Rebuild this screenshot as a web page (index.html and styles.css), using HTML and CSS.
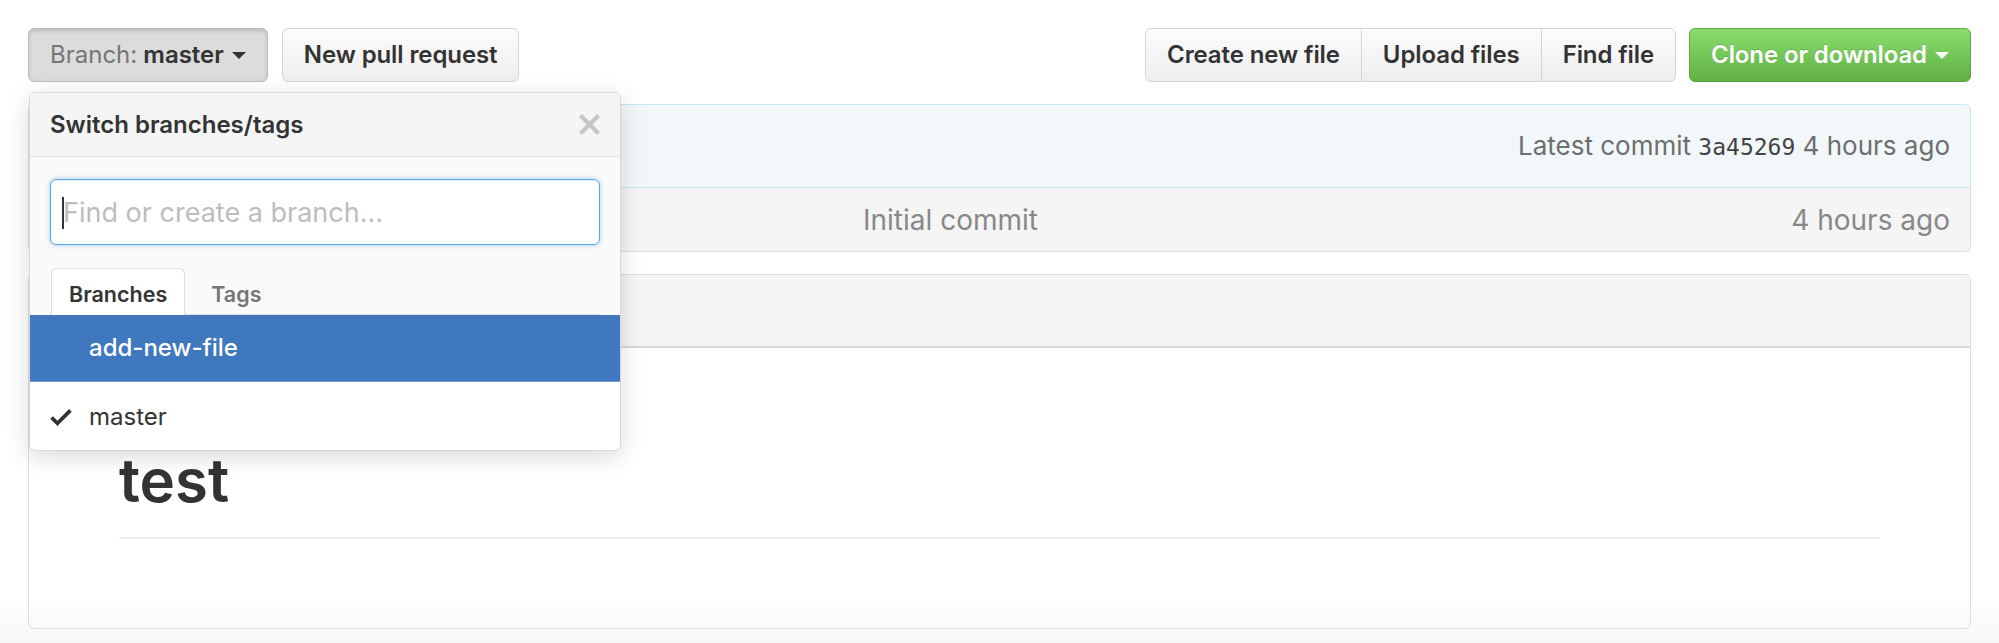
FILE: index.html
```html
<!DOCTYPE html>
<html lang="en">
<head>
<meta charset="utf-8">
<title>Repository</title>
<link rel="stylesheet" href="styles.css">
</head>
<body>
<div class="page">
  <div class="file-navigation">
    <div class="nav-left">
      <div class="branch-select">
        <button class="btn btn-selected"><span class="btn-label">Branch:</span>&nbsp;<span class="btn-strong">master</span><span class="caret"></span></button>
        <div class="select-menu">
          <div class="select-menu-header">
            <span class="select-menu-title">Switch branches/tags</span>
            <svg class="close-icon" viewBox="0.77 2.77 10.46 10.46" aria-hidden="true"><path d="M7.48 8l3.75 3.75-1.48 1.48L6 9.480l-3.75 3.75-1.48-1.48L4.52 8 .77 4.25l1.48-1.48L6 6.52l3.75-3.75 1.48 1.48L7.48 8z"/></svg>
          </div>
          <div class="select-menu-filters">
            <div class="filter-field">
              <input class="filter-input" type="text" placeholder="Find or create a branch...">
              <span class="fake-caret"></span>
            </div>
            <div class="tabs">
              <span class="tab selected">Branches</span>
              <span class="tab">Tags</span>
            </div>
          </div>
          <div class="select-menu-list">
            <div class="select-menu-item focus">
              <span class="item-icon"></span>
              <span class="item-text">add-new-file</span>
            </div>
            <div class="select-menu-item last">
              <svg class="item-icon" viewBox="0 3.5 12 9.5" aria-hidden="true"><path d="M12 5l-8 8-4-4 1.5-1.5L4 10l6.5-6.5L12 5z"/></svg>
              <span class="item-text">master</span>
            </div>
          </div>
        </div>
      </div>
      <button class="btn">New pull request</button>
    </div>
    <div class="nav-right">
      <div class="btn-group">
        <button class="btn">Create new file</button>
        <button class="btn">Upload files</button>
        <button class="btn">Find file</button>
      </div>
      <button class="btn btn-primary">Clone or download<span class="caret"></span></button>
    </div>
  </div>

  <div class="commit-tease">
    <span>Latest commit&nbsp;<span class="sha">3a45269</span>&nbsp;4 hours ago</span>
  </div>
  <div class="files">
    <div class="file-row">
      <span class="file-name"></span>
      <span class="message">Initial commit</span>
      <span class="age">4 hours ago</span>
    </div>
  </div>

  <div class="readme">
    <div class="readme-header"></div>
    <div class="markdown">
      <h1>test</h1>
    </div>
  </div>
</div>
</body>
</html>
```

FILE: styles.css
```css
* {
  box-sizing: border-box;
}

html, body {
  margin: 0;
  padding: 0;
}

body {
  font-family: Inter, "Liberation Sans", Arial, sans-serif;
  color: #333;
  min-height: 643px;
  background: linear-gradient(#ffffff 596px, #f7f7f7 643px);
}

.page {
  padding: 28px 28px 0 28px;
}

/* ---------- top navigation ---------- */
.file-navigation {
  display: flex;
  justify-content: space-between;
  align-items: flex-start;
}

.nav-left {
  display: flex;
  gap: 14px;
}

.nav-right {
  display: flex;
  gap: 13px;
}

.btn {
  height: 54px;
  padding: 0 21px;
  border: 1px solid #d5d5d5;
  border-radius: 6px;
  background: linear-gradient(#fcfcfc, #eeeeee);
  font-family: Inter, "Liberation Sans", Arial, sans-serif;
  font-size: 24px;
  font-weight: 600;
  letter-spacing: -0.1px;
  line-height: 52px;
  color: #333;
  display: inline-flex;
  align-items: center;
  white-space: nowrap;
  cursor: pointer;
}

.btn-selected {
  background: #dcdcdc;
  border-color: #bcbcbc;
  box-shadow: inset 0 2px 4px rgba(0, 0, 0, 0.15);
  letter-spacing: 0;
}

.btn-label {
  color: #767676;
  font-weight: 400;
}

.caret {
  display: inline-block;
  width: 0;
  height: 0;
  border-style: solid;
  border-width: 7px 7px 0 7px;
  border-color: #333 transparent transparent transparent;
  margin-left: 8px;
}

.btn-primary {
  color: #fff;
  background: linear-gradient(#8add6d, #60b044);
  border-color: #5ca941;
  text-shadow: 0 -1px 0 rgba(0, 0, 0, 0.15);
}

.btn-primary .caret {
  border-top-color: #fff;
}

.btn-group {
  display: flex;
}

.btn-group .btn {
  border-radius: 0;
}

.btn-group .btn + .btn {
  margin-left: -1px;
}

.btn-group .btn:first-child {
  border-radius: 6px 0 0 6px;
}

.btn-group .btn:last-child {
  border-radius: 0 6px 6px 0;
}

/* ---------- branch select menu ---------- */
.branch-select {
  position: relative;
}

.select-menu {
  position: absolute;
  top: 64px;
  left: 1px;
  width: 592px;
  background: #fff;
  border: 1px solid #d8d8d8;
  border-radius: 6px;
  box-shadow: 0 6px 24px rgba(0, 0, 0, 0.15);
  z-index: 10;
  overflow: hidden;
}

.select-menu-header {
  height: 64px;
  display: flex;
  align-items: center;
  justify-content: space-between;
  padding: 0 20px;
  background: #f5f5f5;
  border-bottom: 1px solid #e3e3e3;
}

.select-menu-title {
  font-size: 24px;
  font-weight: 600;
  color: #333;
}

.close-icon {
  width: 21px;
  height: 21px;
  fill: #c6c6c6;
}

.select-menu-filters {
  background: #fafafa;
  padding: 22px 20px 0 20px;
}

.filter-field {
  position: relative;
}

.filter-input {
  display: block;
  width: 100%;
  height: 66px;
  padding: 0 12px;
  border: 1px solid #51a7e8;
  border-radius: 6px;
  background: #fff;
  font-family: Inter, "Liberation Sans", Arial, sans-serif;
  font-size: 27px;
  color: #333;
  outline: none;
  box-shadow: inset 0 1px 2px rgba(0, 0, 0, 0.075), 0 0 5px rgba(81, 167, 232, 0.5);
}

.filter-input::placeholder {
  color: #bdbdbd;
}

.fake-caret {
  position: absolute;
  left: 12px;
  top: 18px;
  width: 2px;
  height: 32px;
  background: #333;
}

.tabs {
  display: flex;
  align-items: flex-start;
  gap: 8px;
  margin-top: 23px;
  height: 47px;
  padding-left: 1px;
  border-bottom: 1px solid #dddddd;
}

.tab {
  padding: 4px 17px 0 17px;
  line-height: 42px;
  font-size: 21.5px;
  font-weight: 600;
  color: #767676;
  border: 1px solid transparent;
  border-bottom: 0;
}

.tab.selected {
  height: 47px;
  margin-bottom: -1px;
  background: #fff;
  border-color: #dddddd;
  border-radius: 6px 6px 0 0;
  color: #333;
}

.select-menu-item {
  display: flex;
  align-items: center;
  padding: 16px 16px 16px 20px;
  line-height: 34px;
  font-size: 24px;
  color: #333;
  border-bottom: 1px solid #eeeeee;
}

.select-menu-item.focus {
  background: #4078c0;
  color: #fff;
  font-weight: 500;
  border-bottom-color: #6b98d2;
}

.select-menu-item.last {
  padding-top: 18px;
  border-bottom: 0;
}

.item-icon {
  flex: none;
  width: 22px;
  height: 17px;
  margin-right: 17px;
  fill: #333;
}

/* ---------- commit tease / files ---------- */
.commit-tease {
  margin-top: 22px;
  height: 84px;
  border: 1px solid #c9e6f2;
  border-radius: 6px 6px 0 0;
  background: #f2f8fa;
  display: flex;
  justify-content: flex-end;
  align-items: center;
  padding: 0 20px 2px 20px;
  font-size: 26px;
  color: #6e6e6e;
}

.sha {
  font-family: "DejaVu Sans Mono", "Liberation Mono", monospace;
  font-size: 23px;
  color: #444;
}

.files {
  border: 1px solid #dddddd;
  border-top: 0;
  border-radius: 0 0 6px 6px;
}

.file-row {
  height: 63px;
  display: grid;
  grid-template-columns: 834px 1fr auto;
  align-items: center;
  padding-right: 20px;
  background: #f5f5f5;
  border-radius: 0 0 6px 6px;
  font-size: 28px;
  color: #888;
}

/* ---------- readme ---------- */
.readme {
  margin-top: 22px;
  border: 1px solid #dddddd;
  border-radius: 6px;
}

.readme-header {
  height: 73px;
  background: #f5f5f5;
  border-bottom: 2px solid #d8d8d8;
  border-radius: 6px 6px 0 0;
}

.markdown {
  padding: 94px 90px 89px 90px;
}

.markdown h1 {
  margin: 0;
  font-size: 60px;
  line-height: 77px;
  font-weight: 600;
  color: #333;
  padding-bottom: 18px;
  border-bottom: 2px solid #eeeeee;
}
```
